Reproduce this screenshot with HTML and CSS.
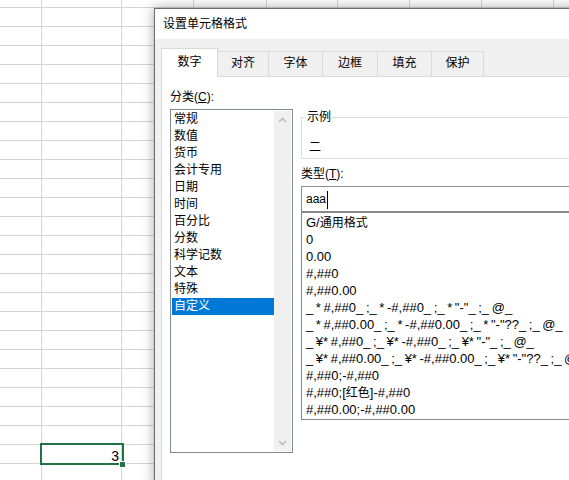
FILE: index.html
```html
<!DOCTYPE html>
<html lang="zh-CN">
<head>
<meta charset="utf-8">
<title>设置单元格格式</title>
<link rel="stylesheet" href="styles.css">
</head>
<body>
<div class="sheet">
  <div class="col w42"></div>
  <div class="col w80"></div>
  <div class="col w72"></div>
  <div class="col w73"></div>
  <div class="col w71"></div>
  <div class="col w72"></div>
  <div class="col w72"></div>
  <div class="col w72"></div>
  <div class="selection"><span class="cell-val">3</span><span class="handle"></span></div>
</div>

<div class="dialog">
  <div class="titlebar">设置单元格格式</div>
  <div class="dlg-body">
    <div class="tabs">
      <div class="tab active">数字</div>
      <div class="tab t52">对齐</div>
      <div class="tab t55">字体</div>
      <div class="tab t56">边框</div>
      <div class="tab t55">填充</div>
      <div class="tab t53">保护</div>
    </div>
    <div class="panel">
      <div class="left">
        <div class="label">分类(<u>C</u>):</div>
        <div class="catbox">
          <div class="cat-items">
            <div class="item">常规</div>
            <div class="item">数值</div>
            <div class="item">货币</div>
            <div class="item">会计专用</div>
            <div class="item">日期</div>
            <div class="item">时间</div>
            <div class="item">百分比</div>
            <div class="item">分数</div>
            <div class="item">科学记数</div>
            <div class="item">文本</div>
            <div class="item">特殊</div>
            <div class="item selected">自定义</div>
          </div>
          <div class="scroll">
            <div class="arrow"><svg width="9" height="6" viewBox="0 0 9 6"><polyline points="1,5 4.5,1.5 8,5" fill="none" stroke="#bdbdbd" stroke-width="1.6"/></svg></div>
            <div class="arrow"><svg width="9" height="6" viewBox="0 0 9 6"><polyline points="1,1 4.5,4.5 8,1" fill="none" stroke="#bdbdbd" stroke-width="1.6"/></svg></div>
          </div>
        </div>
      </div>
      <div class="right">
        <fieldset class="sample">
          <legend>示例</legend>
          <div class="sample-value">二</div>
        </fieldset>
        <div class="label type-label">类型(<u>T</u>):</div>
        <div class="type-input">aaa<span class="caret"></span></div>
        <div class="fmt-list">
          <div class="fmt">G/<span class="cjk">通用格式</span></div>
          <div class="fmt">0</div>
          <div class="fmt">0.00</div>
          <div class="fmt">#,##0</div>
          <div class="fmt">#,##0.00</div>
          <div class="fmt">_ * #,##0_ ;_ * -#,##0_ ;_ * "-"_ ;_ @_</div>
          <div class="fmt">_ * #,##0.00_ ;_ * -#,##0.00_ ;_ * "-"??_ ;_ @_</div>
          <div class="fmt">_ ¥* #,##0_ ;_ ¥* -#,##0_ ;_ ¥* "-"_ ;_ @_</div>
          <div class="fmt">_ ¥* #,##0.00_ ;_ ¥* -#,##0.00_ ;_ ¥* "-"??_ ;_ @_</div>
          <div class="fmt">#,##0;-#,##0</div>
          <div class="fmt">#,##0;[<span class="cjk">红色</span>]-#,##0</div>
          <div class="fmt">#,##0.00;-#,##0.00</div>
        </div>
      </div>
    </div>
  </div>
</div>
</body>
</html>
```
FILE: styles.css
```css
* { box-sizing: border-box; }
html, body { margin: 0; padding: 0; }
body {
  width: 569px;
  height: 480px;
  overflow: hidden;
  position: relative;
  font-family: "Liberation Sans", "Noto Sans CJK SC", sans-serif;
  font-size: 12px;
  color: #000;
  background: #fff;
}

/* spreadsheet */
.sheet {
  position: relative;
  display: flex;
  height: 480px;
  background-image: repeating-linear-gradient(to bottom, #d4d4d4 0 1px, transparent 1px 19px);
  background-size: 100% 19px;
  background-position: 0 7px;
}
.col { flex: none; height: 100%; border-right: 1px solid #d4d4d4; }
.w42 { width: 42px; }
.w80 { width: 80px; }
.w72 { width: 72px; }
.w73 { width: 73px; }
.w71 { width: 71px; }

.selection {
  position: absolute;
  left: 40px;
  top: 443px;
  width: 84px;
  height: 22px;
  border: 2px solid #217346;
  text-align: right;
  padding-right: 3px;
}
.cell-val {
  font-family: "Liberation Sans", sans-serif;
  font-size: 14px;
  line-height: 22px;
  display: block;
}
.handle {
  position: absolute;
  right: -4px;
  bottom: -5px;
  width: 7px;
  height: 7px;
  background: #217346;
  border: 1px solid #fff;
}

/* dialog */
.dialog {
  position: absolute;
  left: 154px;
  top: 8px;
  width: 440px;
  height: 480px;
  border: 1px solid #6a6a6a;
  background: #f0f0f0;
  box-shadow: 0 0 12px rgba(0, 0, 0, 0.35);
}
.titlebar {
  height: 30px;
  line-height: 30px;
  background: #fff;
  padding-left: 8px;
}
.dlg-body { padding: 9px 0 0 6px; }

.tabs {
  display: flex;
  align-items: flex-end;
  height: 28px;
}
.tab {
  flex: none;
  height: 25px;
  margin-left: -1px;
  border: 1px solid #d9d9d9;
  border-bottom: none;
  background: #f0f0f0;
  text-align: center;
  line-height: 23px;
}
.tab.active {
  position: relative;
  z-index: 1;
  margin-left: 0;
  width: 57px;
  height: 29px;
  margin-bottom: -1px;
  padding-top: 2px;
  background: #fff;
}
.t52 { width: 52px; }
.t53 { width: 53px; }
.t55 { width: 55px; }
.t56 { width: 56px; }

.panel {
  display: flex;
  gap: 8px;
  height: 420px;
  padding: 12px 0 0 8px;
  background: #fff;
  border-top: 1px solid #d9d9d9;
  border-left: 1px solid #d9d9d9;
}
.label { line-height: 17px; height: 17px; }
.label u { text-decoration: underline; }

.left { flex: none; width: 123px; }
.catbox {
  margin-top: 3px;
  width: 123px;
  height: 344px;
  border: 1px solid #828790;
  padding: 1px;
  display: flex;
}
.cat-items { flex: 1; }
.item { line-height: 17px; height: 17px; padding-left: 2px; white-space: nowrap; }
.item.selected { background: #0078d7; color: #fff; }
.scroll {
  flex: none;
  width: 17px;
  background: #f0f0f0;
  display: flex;
  flex-direction: column;
  justify-content: space-between;
}
.arrow {
  height: 17px;
  display: flex;
  align-items: center;
  justify-content: center;
}
.arrow svg { display: block; }

.right { flex: none; width: 300px; padding-top: 20px; }
.sample {
  margin: 0;
  padding: 0 0 0 4px;
  border: 1px solid #dcdcdc;
  min-width: 0;
  height: 50px;
}
.sample legend {
  padding: 0 1px;
  line-height: 17px;
  font-size: 12px;
}
.sample-value {
  line-height: 17px;
  margin-top: 13px;
  padding-left: 3px;
}
.type-label { margin-top: 7px; }
.type-input {
  margin-top: 3px;
  height: 26px;
  border: 1px solid #8e8e8e;
  padding-left: 4px;
  line-height: 24px;
  background: #fff;
}
.caret {
  display: inline-block;
  width: 1px;
  height: 18px;
  background: #000;
  vertical-align: middle;
  margin-left: 1px;
}
.fmt-list {
  height: 208px;
  border: 1px solid #828790;
  padding: 1px 0;
  overflow: hidden;
}
.fmt {
  height: 17px;
  line-height: 17px;
  padding-left: 4px;
  font-size: 13px;
  word-spacing: -1px;
  white-space: nowrap;
}
.fmt .cjk { font-size: 12px; }
```
